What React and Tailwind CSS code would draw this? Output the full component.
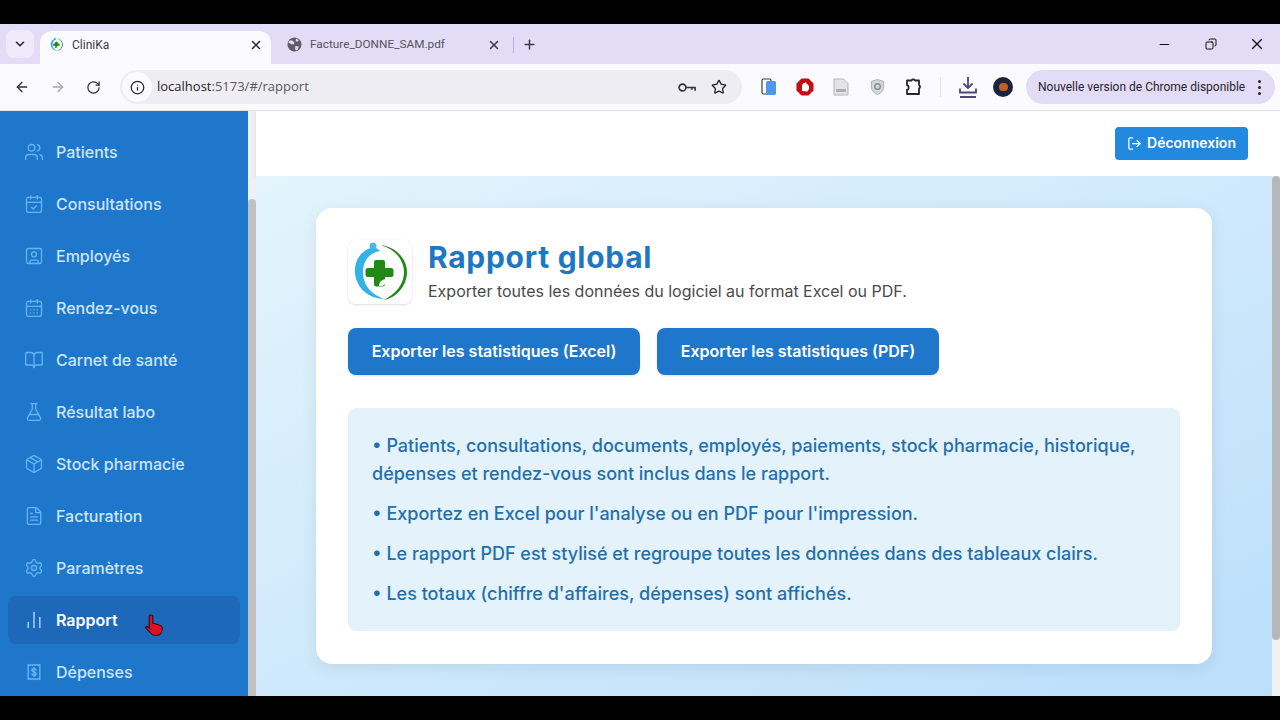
// CliniKa "Rapport global" page inside a Chrome window.
import {
  ArrowLeft, ArrowRight, RotateCw, Info, Star, X, Plus, Minus, ChevronDown, Copy,
  Users, CalendarCheck, SquareUser, CalendarDays, BookOpen, FlaskConical, Package,
  FileText, Settings, ChartNoAxesColumn, LogOut,
} from 'lucide-react';

function ReceiptDollar({ className }) {
  return (
    <svg viewBox="0 0 24 24" fill="none" stroke="currentColor" strokeWidth="1.7" strokeLinecap="round" strokeLinejoin="round" className={className}>
      <path d="M5 3l1.750 1L8.500 3l1.750 1L12 3l1.750 1L15.500 3l1.750 1L19 3v18l-1.750-1-1.750 1-1.750-1L12 21l-1.750-1-1.750 1-1.750-1L5 21z" />
      <path d="M14.500 9.500c-.4-.9-1.300-1.500-2.500-1.500-1.500 0-2.500.8-2.500 2s1 1.700 2.500 2 2.500.8 2.500 2-1 2-2.500 2c-1.200 0-2.100-.6-2.500-1.500M12 6.500v11" />
    </svg>
  );
}

const NAV = [
  ['Patients', Users],
  ['Consultations', CalendarCheck],
  ['Employés', SquareUser],
  ['Rendez-vous', CalendarDays],
  ['Carnet de santé', BookOpen],
  ['Résultat labo', FlaskConical],
  ['Stock pharmacie', Package],
  ['Facturation', FileText],
  ['Paramètres', Settings],
  ['Rapport', ChartNoAxesColumn],
  ['Dépenses', ReceiptDollar],
];

function CliniLogo({ size }) {
  return (
    <svg viewBox="0 0 64 64" width={size} height={size}>
      <path d="M27 7 C13 9 6 21 7 33 C8 47 20 59 37 59 C27 56 15 48 15 32 C15 21 21 13 32 11 Z" fill="#33b3e3" />
      <circle cx="25" cy="6" r="3.500" fill="#4db6e5" />
      <path d="M33 5 C48 7 59 19 59 32 C59 46 48 58 36 60 C47 54 56 45 56 32 C56 20 47 9 33 5 Z" fill="#1f8a16" />
      <path d="M28 20 h7 a2 2 0 0 1 2 2 v6 h6 a2.500 2.500 0 0 1 2.500 2.500 v4 a2.500 2.500 0 0 1 -2.500 2.500 h-6 v7 a2.500 2.500 0 0 1 -2.500 2.500 h-6 a2.500 2.500 0 0 1 -2.500 -2.500 v-7 h-6 a2.500 2.500 0 0 1 -2.500 -2.500 v-4 a2.500 2.500 0 0 1 2.500 -2.500 h6 v-6 a2 2 0 0 1 2 -2 z" fill="#1f8a16" />
      <path d="M31 46 C31 41 35 39 39 39 C39 43 36 47 31 46 Z" fill="#fff" />
    </svg>
  );
}

function ChromeBar() {
  return (
    <div className="font-['Open_Sans',sans-serif] text-[#3c3a45]">
      {/* tab strip */}
      <div className="h-10 bg-[#e3dcf6] flex items-end pl-[6px]">
        <div className="w-[28px] h-[28px] mb-[6px] rounded-lg bg-[#efeafa] flex items-center justify-center">
          <ChevronDown size={14} strokeWidth={2.6} className="text-[#26242c]" />
        </div>
        <div className="ml-[6px] w-[231px] h-[33px] bg-[#fbfaff] rounded-t-xl flex items-center pl-[9px] pr-[8px] pb-[6px]">
          <CliniLogo size={15} />
          <span className="ml-[8px] text-xs flex-1 font-['Roboto',sans-serif]">CliniKa</span>
          <X size={14} strokeWidth={2.6} className="text-[#26242c]" />
        </div>
        <div className="w-[243px] h-[33px] flex items-center pl-[16px] pb-[6px]">
          <svg viewBox="0 0 16 16" className="w-[15px] h-[15px]">
            <circle cx="8" cy="8" r="7.500" fill="#5f5d68" />
            <path d="M3 3.500l3 .5 2 2-1 2-2.500-.5L1.500 6zM9 9.500l3.500.5-1 3.500-2 1-1-2.500zM10 1.500l2.500 2-1.500 1.500-2-1z" fill="#e3dcf6" />
          </svg>
          <span className="ml-[8px] text-[11.800px] flex-1 text-[#55535e] font-['Roboto',sans-serif]">Facture_DONNE_SAM.pdf</span>
          <X size={14} strokeWidth={2.6} className="text-[#3c3a45]" />
          <span className="ml-[12px] w-px h-[16px] bg-[#bdb3ea]"></span>
        </div>
        <div className="h-[33px] ml-[8px] pb-[6px] flex items-center">
          <Plus size={15} strokeWidth={2.4} className="text-[#3c3a45]" />
        </div>
        <div className="ml-auto h-10 flex items-center pr-[14px]">
          <Minus size={15} strokeWidth={1.8} className="text-[#111]" />
          <Copy size={12} strokeWidth={2} className="ml-[33px] text-[#111] -scale-x-100" />
          <X size={18} strokeWidth={1.8} className="ml-[31px] text-[#111]" />
        </div>
      </div>
      {/* toolbar */}
      <div className="h-[47px] bg-[#fbfaff] border-b border-[#e4e2ea] flex items-center">
        <ArrowLeft size={16} strokeWidth={2} className="ml-[14px] text-[#33313a]" />
        <ArrowRight size={16} strokeWidth={2} className="ml-[20px] text-[#a9a7b0]" />
        <RotateCw size={15} strokeWidth={2} className="ml-[20px] text-[#33313a]" />
        <div className="ml-[19px] w-[622px] h-[34px] rounded-full bg-[#efedf4] flex items-center pl-[2px] pr-[15px]">
          <span className="w-[30px] h-[30px] rounded-full bg-[#fbfaff] flex items-center justify-center">
            <Info size={15} strokeWidth={2} className="text-[#26242c]" />
          </span>
          <span className="ml-[5px] text-[13px] flex-1 text-[#5a5862]"><span className="text-[#26242c]">localhost</span>:5173/#/rapport</span>
          {/* password key */}
          <svg viewBox="0 0 20 12" fill="none" stroke="#33313a" strokeWidth="1.800" className="w-[18px] h-[11px] mr-[15px]">
            <circle cx="5" cy="6" r="3.800" />
            <path d="M9 6h10v3.500M15.500 6v2.500" />
          </svg>
          <Star size={16} strokeWidth={2} className="text-[#26242c]" />
        </div>
        <svg viewBox="0 0 16 18" className="ml-[19px] w-[16px] h-[18px]">
          <rect x="1" y="1" width="9" height="15" rx="1.500" fill="#fff" stroke="#3c3a45" strokeWidth="1.200" />
          <rect x="5" y="3" width="10" height="14" rx="1.500" fill="#4f97ea" />
        </svg>
        <svg viewBox="0 0 18 18" className="ml-[19px] w-[18px] h-[18px]">
          <path d="M5.500 0.500h7l5 5v7l-5 5h-7l-5-5v-7z" fill="#c40d12" />
          <path d="M6 13V6.500h1.200V5H9v-.5h1.500V6h1.200v1.500H13V11l-1.500 2.500z" fill="#fff" />
        </svg>
        <svg viewBox="0 0 16 18" className="ml-[19px] w-[16px] h-[18px]">
          <path d="M1 1h9.500L15 5.500V17H1z" fill="#e4e3e6" stroke="#b5b4ba" strokeWidth="1" />
          <rect x="3" y="11" width="10" height="3" fill="#adacb2" />
        </svg>
        <svg viewBox="0 0 16 18" className="ml-[21px] w-[15px] h-[18px]">
          <path d="M8 1l6.500 2v6c0 4-3 6.500-6.500 8-3.500-1.500-6.500-4-6.500-8V3z" fill="#d5d6da" stroke="#a9abb2" strokeWidth="1" />
          <circle cx="8" cy="8.500" r="3" fill="none" stroke="#8b8d95" strokeWidth="1.500" />
        </svg>
        {/* extensions puzzle */}
        <svg viewBox="0 0 18 18" fill="none" stroke="#26242c" strokeWidth="1.800" strokeLinejoin="round" className="ml-[19px] w-[18px] h-[18px]">
          <path d="M3 2.500h4.500a2 2 0 0 1 3.500 0H15v4.500a2 2 0 0 1 0 3.500V16H3v-4a2 2 0 0 0 1.500-2.500A2 2 0 0 0 3 7z" />
        </svg>
        <span className="ml-[18px] w-px h-[20px] bg-[#e3e1ea]"></span>
        {/* downloads */}
        <svg viewBox="0 0 20 24" fill="none" stroke="#4b4880" strokeWidth="1.800" className="ml-[17px] w-[20px] h-[24px]">
          <path d="M10 2v11M5.500 8.500L10 13l4.500-4.500M2 13.500v4h16v-4M2 22h16" />
        </svg>
        <span className="ml-[15px] w-[20px] h-[20px] rounded-full bg-[#1b2340] flex items-center justify-center">
          <span className="w-[9px] h-[8px] rounded-sm bg-[#c2611f]"></span>
        </span>
        <div className="ml-[13px] w-[249px] h-[34px] rounded-full bg-[#e3dcf6] flex items-center pl-[12px] pr-[7px]">
          <span className="text-xs flex-1 whitespace-nowrap text-[#26242c] font-['Roboto',sans-serif]">Nouvelle version de Chrome disponible</span>
          <span className="flex flex-col gap-[3px] mr-[7px]">
            <span className="w-[3px] h-[3px] rounded-full bg-[#26242c]"></span>
            <span className="w-[3px] h-[3px] rounded-full bg-[#26242c]"></span>
            <span className="w-[3px] h-[3px] rounded-full bg-[#26242c]"></span>
          </span>
        </div>
      </div>
    </div>
  );
}

function Sidebar() {
  return (
    <aside className="w-[256px] flex shrink-0 bg-[#eef1f4]">
      <nav className="w-[248px] bg-[#1f77cc] px-2 pt-[17px] overflow-hidden flex flex-col gap-1">
        {NAV.map(([label, Icon]) => {
          const active = label === 'Rapport';
          return (
            <div key={label} className={`relative shrink-0 h-12 rounded-lg flex items-center pl-4 ${active ? 'bg-[#1e68ba]' : ''}`}>
              <Icon size={20} strokeWidth={1.6} className={`w-5 h-5 ${active ? 'text-[#bbdefb]' : 'text-[#64b5f6]'}`} />
              <span className={`ml-3 text-base font-medium font-['Inter',sans-serif] ${active ? 'text-white font-semibold' : 'text-[#cbe6fb]'}`}>{label}</span>
              {active && (
                <svg viewBox="0 0 18 22" className="absolute left-[137px] top-[18px] w-[18px] h-[22px]">
                  <path d="M6 1c1.200 0 1.800.8 1.800 2v6l6.500 2c2 .6 3 1.700 3 3.500 0 3.500-2 7-6 7-3 0-5-1-6.500-3.500L.8 14c-.5-1 .8-2 1.800-1.200l1.600 1.500V3c0-1.200.6-2 1.800-2z" fill="#e0101c" stroke="#3a0a20" strokeWidth="1.200" />
                </svg>
              )}
            </div>
          );
        })}
      </nav>
      {/* sidebar scrollbar */}
      <div className="w-2 pt-[88px] flex">
        <div className="w-2 flex-1 bg-[#c1c1c1] rounded-t"></div>
      </div>
    </aside>
  );
}

const NOTES = [
  'Exportez en Excel pour l\'analyse ou en PDF pour l\'impression.',
  'Le rapport PDF est stylisé et regroupe toutes les données dans des tableaux clairs.',
  'Les totaux (chiffre d\'affaires, dépenses) sont affichés.',
];

function Report() {
  return (
    <div className="w-[896px] h-[456px] bg-white rounded-2xl shadow-[0_4px_16px_rgba(0,0,0,0.08)] p-8">
      <div className="flex items-start gap-4 h-16">
        <div className="w-16 h-16 rounded-lg bg-white shadow-sm flex items-center justify-center">
          <CliniLogo size={64} />
        </div>
        <div className="-mt-px">
          <h1 className="text-3xl font-bold leading-9 tracking-[0.7px] text-[#1f77c4]">Rapport global</h1>
          <p className="mt-[4px] text-base leading-6 text-[#4a4a4a]">Exporter toutes les données du logiciel au format Excel ou PDF.</p>
        </div>
      </div>
      <div className="flex gap-[17px] mt-6">
        <button className="h-[47px] w-[292px] pb-px rounded-lg bg-[#1f77cc] text-white font-semibold text-base shadow-sm">Exporter les statistiques (Excel)</button>
        <button className="h-[47px] w-[282px] pb-px rounded-lg bg-[#1f77cc] text-white font-semibold text-base shadow-sm">Exporter les statistiques (PDF)</button>
      </div>
      <div className="mt-[33px] h-[223px] rounded-lg bg-[#e4f2fb] px-6 pt-6 text-lg leading-7 font-medium text-[#1f70ad]">
        <p>• Patients, consultations, documents, employés, paiements, stock pharmacie, historique, dépenses et rendez-vous sont inclus dans le rapport.</p>
        {NOTES.map((n) => (
          <p key={n} className="mt-3">• {n}</p>
        ))}
      </div>
    </div>
  );
}

export default function App() {
  return (
    <div className="w-[1280px] h-screen bg-black flex flex-col overflow-hidden font-['Inter',sans-serif]">
      <div className="h-6 shrink-0 bg-black"></div>
      <ChromeBar />
      <div className="h-[585px] flex overflow-hidden">
        <Sidebar />
        <main className="flex-1 flex flex-col min-w-0">
          <header className="h-[65px] shrink-0 bg-white shadow-sm flex items-center justify-end pr-8">
            <button className="h-[33px] w-[133px] pb-px rounded bg-[#2389de] text-white text-sm font-semibold flex items-center justify-center gap-[5px]">
              <LogOut size={15} strokeWidth={2} />
              Déconnexion
            </button>
          </header>
          <div className="flex-1 flex min-h-0 bg-gradient-to-br from-[#e3f4fc] to-[#bbdefb]">
            <div className="flex-1 pl-[60px] pt-8">
              <Report />
            </div>
            {/* page scrollbar */}
            <div className="w-2 flex flex-col bg-[#f1f1f1]">
              <div className="h-[464px] bg-[#b5b8bb] rounded-sm"></div>
            </div>
          </div>
        </main>
      </div>
      <div className="h-6 shrink-0 bg-black"></div>
    </div>
  );
}
